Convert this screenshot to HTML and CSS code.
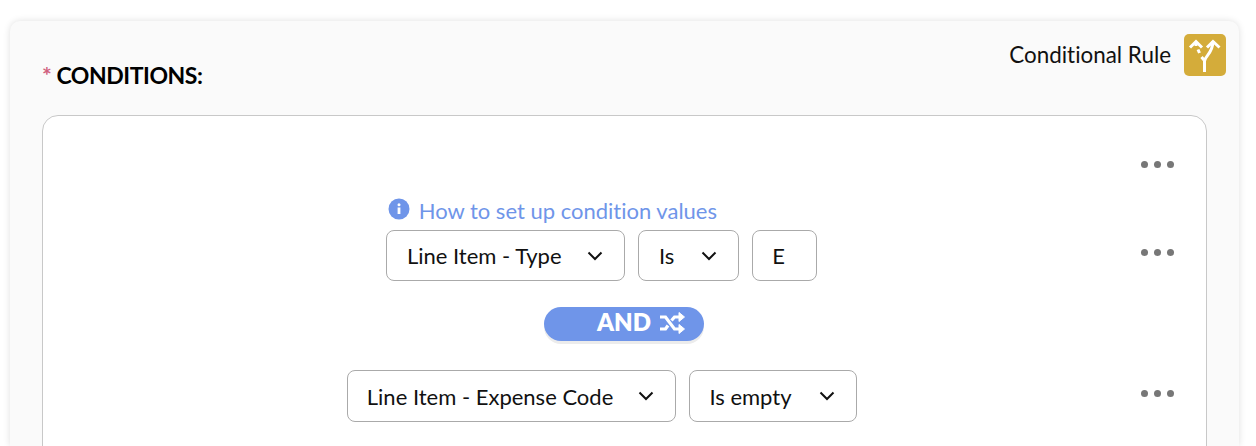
FILE: index.html
```html
<!DOCTYPE html>
<html lang="en">
<head>
<meta charset="utf-8">
<title>Conditions</title>
<link rel="stylesheet" href="styles.css">
</head>
<body>
<section class="card">
  <header class="card-head">
    <h2 class="title"><span class="req">*</span> CONDITIONS:</h2>
    <div class="rule">
      <span>Conditional Rule</span>
      <span class="rule-icon">
        <svg width="42" height="42" viewBox="0 0 42 42" fill="none" stroke="#fff" stroke-width="3">
          <path d="M20.500 38V27C21 22 29 19 29 7"/>
          <path d="M23 13.500L29 7.500L35.500 13.500"/>
          <path d="M20 26L17.500 23M15.500 19L14 15.500M12 12V8"/>
          <path d="M6 13.500L12 7.500L18 13.500"/>
        </svg>
      </span>
    </div>
  </header>
  <div class="box">
    <div class="row row-top">
      <div class="row-main"></div>
      <div class="dots"><i></i><i></i><i></i></div>
    </div>
    <div class="row row-first">
      <div class="row-main">
        <div class="group">
          <a class="help" href="#">
            <svg class="help-icon" width="22" height="22" viewBox="0 0 22 22"><circle cx="11" cy="11" r="10.500" fill="#6f95e9"/><circle cx="11" cy="6.800" r="1.500" fill="#fff"/><rect x="9.600" y="9.500" width="2.800" height="6.500" fill="#fff"/></svg>
            How to set up condition values
          </a>
          <div class="fields">
            <div class="select w-type"><span>Line Item - Type</span><svg class="chev" width="16" height="10" viewBox="0 0 16 10"><path d="M1.500 1.500L8 8L14.500 1.500"/></svg></div>
            <div class="select w-is"><span>Is</span><svg class="chev" width="16" height="10" viewBox="0 0 16 10"><path d="M1.500 1.500L8 8L14.500 1.500"/></svg></div>
            <div class="select w-val"><span>E</span></div>
          </div>
        </div>
      </div>
      <div class="dots"><i></i><i></i><i></i></div>
    </div>
    <div class="and-wrap">
      <div class="and"><span class="and-label">AND</span>
        <svg width="27" height="24" viewBox="0 0 27 24" fill="none" stroke="#fff" stroke-width="3.200">
          <path d="M1 6H6.500L15.500 18H22"/>
          <path d="M1 18H6.500L9 14.500M12.500 9.500L15.500 6H22"/>
          <path d="M20 1.500L25.500 6L20 10.500Z" fill="#fff" stroke-width="1"/>
          <path d="M20 13.500L25.500 18L20 22.500Z" fill="#fff" stroke-width="1"/>
        </svg>
      </div>
    </div>
    <div class="row row-second">
      <div class="row-main">
        <div class="fields">
          <div class="select w-code"><span>Line Item - Expense Code</span><svg class="chev" width="16" height="10" viewBox="0 0 16 10"><path d="M1.500 1.500L8 8L14.500 1.500"/></svg></div>
          <div class="select w-empty"><span>Is empty</span><svg class="chev" width="16" height="10" viewBox="0 0 16 10"><path d="M1.500 1.500L8 8L14.500 1.500"/></svg></div>
        </div>
      </div>
      <div class="dots"><i></i><i></i><i></i></div>
    </div>
  </div>
</section>
</body>
</html>
```
FILE: styles.css
```css
* { box-sizing: border-box; }
html, body { margin: 0; height: 446px; overflow: hidden; background: #fff; }
body { font-family: Lato, "Liberation Sans", sans-serif; font-variant-ligatures: none; color: #111; padding: 21px 17px 0 10px; }
.card {
  height: 425px;
  overflow: hidden;
  background: #fafafa;
  border-radius: 10px 10px 0 0;
  box-shadow: 0 0 7px rgba(0, 0, 0, .13);
  padding: 13px 32px 0;
}
.card-head { display: flex; justify-content: space-between; height: 81px; margin-right: -19px; }
.title { margin: 28px 0 0; font-size: 23px; line-height: 26px; font-weight: 700; letter-spacing: -.45px; color: #000; }
.req { color: #d0607f; }
.rule { display: flex; align-items: flex-start; gap: 13px; font-size: 22.400px; line-height: 42px; color: #111; }
.rule-icon { display: block; width: 42px; height: 42px; background: #d4ac3a; border-radius: 5px; }
.rule-icon svg { display: block; }
.box { background: #fff; border: 1px solid #c8c8c8; border-radius: 16px; height: 400px; padding-top: 30px; }
.row { display: flex; padding-left: 20.600px; }
.row-main { flex: 1; display: flex; justify-content: center; }
.row-top { height: 35px; }
.row-first { margin-top: 15px; height: 85px; }
.row-second { margin-top: 29px; }
.group { display: flex; flex-direction: column; }
.help { display: flex; align-items: center; gap: 8.400px; height: 34px; padding: 0 0 4px 2px; color: #6f95e9; font-size: 22px; line-height: 30px; text-decoration: none; }
.help-icon { margin-top: -4px; }
.fields { display: flex; gap: 13px; }
.select {
  display: flex; align-items: center; justify-content: space-between;
  height: 51px; padding: 0 21px 0 19.600px;
  background: #fff; border: 1px solid #aaa; border-radius: 8px;
  font-size: 22px; color: #111;
}
.row-second .select { height: 52px; }
.chev { fill: none; stroke: #111; stroke-width: 2; }
.w-type { width: 239px; }
.w-is { width: 101px; }
.w-val { width: 65px; padding-left: 19px; }
.w-code { width: 329px; padding-left: 19px; }
.w-empty { width: 168px; }
.dots { display: flex; gap: 6.400px; width: 65.500px; height: 7px; margin-left: .5px; }
.dots i { display: block; width: 7px; height: 7px; border-radius: 50%; background: #777; }
.row-top .dots { margin-top: 15px; }
.row-first .dots { margin-top: 53px; }
.row-second .dots { margin-top: 20px; }
.and-wrap { display: flex; justify-content: center; margin-top: 26px; padding-right: 1px; }
.and {
  display: flex; align-items: center; justify-content: flex-end; gap: 8px;
  width: 160px; height: 34px; padding: 0 18px 3px 0;
  background: #6f95e9; border-radius: 17px; box-shadow: 0 3px 0 #ececec;
  color: #fff; font-size: 24px; font-weight: 800;
}
.and-label { margin-bottom: 3px; }
```
